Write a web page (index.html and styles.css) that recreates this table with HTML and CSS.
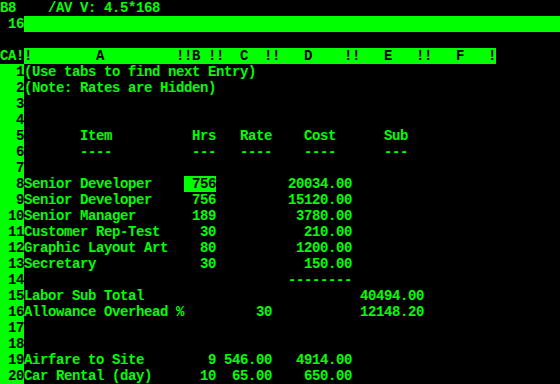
FILE: index.html
```html
<!DOCTYPE html>
<html>
<head>
<meta charset="utf-8">
<link rel="stylesheet" href="styles.css">
</head>
<body>
<div class="screen">
  <div class="line status">B8    /AV V: 4.5*168</div>
  <div class="line entry"><span class="coord">16</span><span class="editbar"></span></div>
  <div class="line"></div>
  <div class="line header"><span class="corner">CA!</span><span class="colbar">!        A         !!B !!  C  !!   D    !!   E   !!   F   !</span></div>
  <div class="sheet">
    <div class="row"><span class="rn">1</span><span class="cells">(Use tabs to find next Entry)</span></div>
    <div class="row"><span class="rn">2</span><span class="cells">(Note: Rates are Hidden)</span></div>
    <div class="row"><span class="rn">3</span><span class="cells"></span></div>
    <div class="row"><span class="rn">4</span><span class="cells"></span></div>
    <div class="row"><span class="rn">5</span><span class="cells">       Item          Hrs   Rate    Cost      Sub</span></div>
    <div class="row"><span class="rn">6</span><span class="cells">       ----          ---   ----    ----      ---</span></div>
    <div class="row"><span class="rn">7</span><span class="cells"></span></div>
    <div class="row"><span class="rn">8</span><span class="cells">Senior Developer    <span class="cursor"> 756</span>         20034.00</span></div>
    <div class="row"><span class="rn">9</span><span class="cells">Senior Developer     756         15120.00</span></div>
    <div class="row"><span class="rn">10</span><span class="cells">Senior Manager       189          3780.00</span></div>
    <div class="row"><span class="rn">11</span><span class="cells">Customer Rep-Test     30           210.00</span></div>
    <div class="row"><span class="rn">12</span><span class="cells">Graphic Layout Art    80          1200.00</span></div>
    <div class="row"><span class="rn">13</span><span class="cells">Secretary             30           150.00</span></div>
    <div class="row"><span class="rn">14</span><span class="cells">                                 --------</span></div>
    <div class="row"><span class="rn">15</span><span class="cells">Labor Sub Total                           40494.00</span></div>
    <div class="row"><span class="rn">16</span><span class="cells">Allowance Overhead %         30           12148.20</span></div>
    <div class="row"><span class="rn">17</span><span class="cells"></span></div>
    <div class="row"><span class="rn">18</span><span class="cells"></span></div>
    <div class="row"><span class="rn">19</span><span class="cells">Airfare to Site        9 546.00   4914.00</span></div>
    <div class="row"><span class="rn">20</span><span class="cells">Car Rental (day)      10  65.00    650.00</span></div>
  </div>
</div>
</body>
</html>
```
FILE: styles.css
```css
html, body {
  margin: 0;
  padding: 0;
  background: #000;
}
.screen {
  width: 560px;
  height: 384px;
  overflow: hidden;
  background: #000;
  color: #00ff00;
  font-family: "Liberation Mono", "DejaVu Sans Mono", monospace;
  font-weight: bold;
  font-size: 14px;
  letter-spacing: -0.4px;
  line-height: 16px;
}
.line {
  height: 16px;
  white-space: pre;
  display: flex;
}
.coord {
  width: 24px;
  text-align: right;
}
.editbar {
  flex: 1;
  background: #00ff00;
}
.corner {
  width: 24px;
}
.colbar {
  background: #00ff00;
  color: #000;
  width: 472px;
}
.sheet {
  display: flex;
  flex-direction: column;
}
.row {
  display: flex;
  height: 16px;
  white-space: pre;
}
.rn {
  width: 24px;
  flex: none;
  background: #00ff00;
  color: #000;
  text-align: right;
}
.cells {
  flex: 1;
}
.cursor {
  background: #00ff00;
  color: #000;
}
```
